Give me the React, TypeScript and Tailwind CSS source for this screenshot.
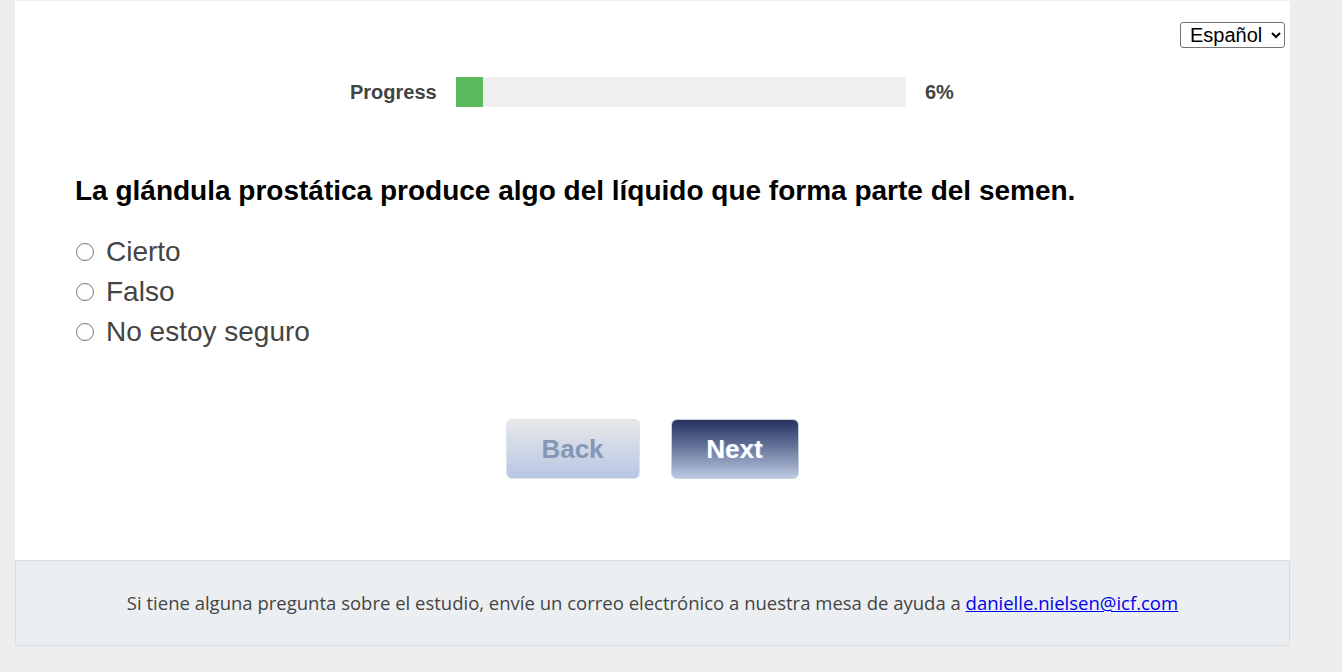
import React from "react";

const options = ["Cierto", "Falso", "No estoy seguro"];

const App: React.FC = () => {
  return (
    <div className="min-h-[672px] bg-[#eeeeee] pt-px font-['Liberation_Sans',Arial,sans-serif]">
      <div className="ml-[15px] w-[1275px]">
        <div className="relative h-[559px] bg-white">
          <select
            className="absolute right-[5px] top-[21px] h-[26px] w-[105px] rounded-[3px] border border-[#767676] bg-white pl-[5px] pr-[2px] text-[20px] text-black"
            defaultValue="es"
          >
            <option value="en">English</option>
            <option value="es">Español</option>
          </select>

          <div className="flex items-center pt-[76px] pl-[335px]">
            <span className="w-[106px] text-[20px] font-bold text-[#444]">Progress</span>
            <div className="h-[30px] w-[450px] bg-[#f0f0f0]">
              <div className="h-full w-[27px] bg-[#5cb85c]" />
            </div>
            <span className="ml-[19px] text-[20px] font-bold text-[#444]">6%</span>
          </div>

          <div className="pl-[60px] pt-[68px]">
            <h2 className="text-[28px] font-bold leading-[32px] text-black">
              La glándula prostática produce algo del líquido que forma parte del semen.
            </h2>
            <div className="mt-[25px] flex flex-col">
              {options.map((o) => (
                <label key={o} className="flex h-[40px] items-center text-[28px] text-[#444]">
                  <input type="radio" name="q" className="ml-[1px] mr-[12px] h-[18px] w-[18px] accent-[#444]" />
                  {o}
                </label>
              ))}
            </div>
          </div>

          <div className="mt-[67px] flex justify-center gap-[31px] pr-[1px]">
            <button className="h-[60px] w-[134px] rounded-[6px] border border-[#dde3ec] bg-gradient-to-b from-[#e8e8e8] to-[#b6c6e2] text-[26px] font-bold text-[#8597b6]">
              Back
            </button>
            <button className="h-[60px] w-[128px] rounded-[6px] border border-[#c9d1e0] bg-gradient-to-b from-[#27315f] to-[#bccae2] text-[26px] font-bold text-white [text-shadow:1px_1px_1px_#8fa0c8]">
              Next
            </button>
          </div>
        </div>

        <div className="flex h-[86px] items-center justify-center border border-[#d8dde3] bg-[#eceff2] font-['Open_Sans',sans-serif] text-[18.5px] text-[#444]">
          <p>
            Si tiene alguna pregunta sobre el estudio, envíe un correo electrónico a nuestra mesa de ayuda a{" "}
            <a href="#" className="text-[#0000ee] underline">
              danielle.nielsen@icf.com
            </a>
          </p>
        </div>
      </div>
    </div>
  );
};

export default App;
